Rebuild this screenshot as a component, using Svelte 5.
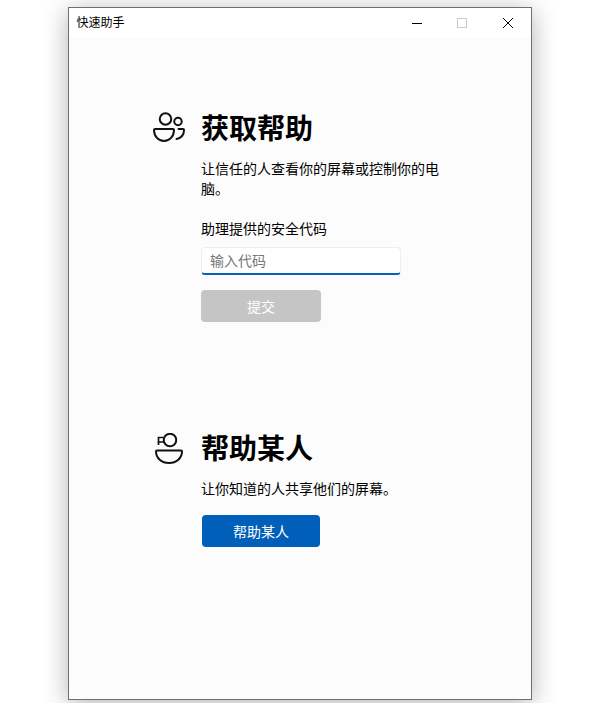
<script>
    let code = '';
</script>

<div class="page">
    <div class="window">
        <header class="titlebar">
            <span class="title">快速助手</span>
            <div class="controls">
                <span class="ctl">
                    <svg width="12" height="12" viewBox="0 0 12 12"><path d="M2 6.500h10" stroke="#000" fill="none" /></svg>
                </span>
                <span class="ctl">
                    <svg width="12" height="12" viewBox="0 0 12 12"><rect x="1.500" y="1.500" width="9" height="9" stroke="#ccc" fill="none" /></svg>
                </span>
                <span class="ctl">
                    <svg width="12" height="12" viewBox="0 0 12 12"><path d="M1 1l10 10M11 1L1 11" stroke="#000" fill="none" /></svg>
                </span>
            </div>
        </header>

        <main class="content">
            <section class="block get-help">
                <div class="icon">
                    <svg width="34" height="32" viewBox="0 0 34 32" fill="none" stroke="#111" stroke-width="2">
                        <circle cx="12.500" cy="8" r="5.750" />
                        <path d="M2 18h18a1 1 0 0 1 1 1c0 6.500-4.500 11-10 11S1 25.500 1 19a1 1 0 0 1 1-1z" />
                        <circle cx="25" cy="10.500" r="3.750" />
                        <path d="M25.500 18h4.500a1 1 0 0 1 1 1c0 4.500-3 8-7.500 9" stroke-linecap="round" />
                    </svg>
                </div>
                <div class="body">
                    <h1>获取帮助</h1>
                    <p class="desc">让信任的人查看你的屏幕或控制你的电脑。</p>
                    <label class="label" for="code">助理提供的安全代码</label>
                    <input id="code" class="input" placeholder="输入代码" bind:value={code} />
                    <button class="btn disabled" disabled>提交</button>
                </div>
            </section>

            <section class="block give-help">
                <div class="icon">
                    <svg width="34" height="32" viewBox="0 0 34 32" fill="none" stroke="#111" stroke-width="2">
                        <circle cx="17" cy="7" r="6.250" />
                        <path d="M10.500 4.500H5.500v4.500h5" stroke-width="1.700" />
                        <path d="M5.500 9v3" stroke-width="1.700" />
                        <path d="M4 17.500h24a1 1 0 0 1 1 1c0 6.500-5.500 11.500-13 11.500S3 25 3 18.500a1 1 0 0 1 1-1z" />
                    </svg>
                </div>
                <div class="body">
                    <h1>帮助某人</h1>
                    <p class="desc">让你知道的人共享他们的屏幕。</p>
                    <button class="btn primary">帮助某人</button>
                </div>
            </section>
        </main>
    </div>
</div>

<style>
:global(body) {
    margin: 0;
    background: #fff;
}

.page {
    display: flex;
    justify-content: center;
    padding-top: 7px;
    height: 696px;
    overflow: hidden;
    font-family: "Noto Sans CJK SC", "Liberation Sans", sans-serif;
    color: #000;
}

.window {
    box-sizing: border-box;
    width: 464px;
    height: 693px;
    border: 1px solid #6f6f6f;
    background: #fcfcfc;
    box-shadow: 0 4px 24px rgba(0, 0, 0, 0.3);
    display: flex;
    flex-direction: column;
}

.titlebar {
    height: 30px;
    background: #fff;
    display: flex;
    justify-content: space-between;
    align-items: center;
    padding-left: 7.5px;
}

.title {
    font-size: 12px;
    line-height: 28px;
    margin-bottom: 2px;
}

.controls {
    display: flex;
}

.ctl {
    width: 46px;
    height: 30px;
    display: flex;
    align-items: center;
    justify-content: center;
}

.content {
    flex: 1;
    padding: 69px 0 0 84px;
}

.block {
    display: flex;
    gap: 14px;
}

.give-help {
    margin-top: 105px;
}

.icon {
    width: 34px;
    padding-top: 4px;
}

.give-help .icon {
    padding-top: 6px;
}

.body {
    width: 240px;
}

h1 {
    margin: 0;
    font-size: 28px;
    line-height: 40px;
    font-weight: 700;
}

.desc {
    margin: 11px 0 0;
    font-size: 14px;
    line-height: 20px;
}

.label {
    display: block;
    margin-top: 20px;
    font-size: 14px;
    line-height: 20px;
}

.input {
    display: block;
    box-sizing: border-box;
    width: 200px;
    height: 28px;
    margin-top: 9px;
    padding: 0 8px 2px;
    border: 1px solid #eeeeee;
    border-bottom: 2px solid #0a5fb4;
    border-radius: 4px;
    background: #fff;
    font: inherit;
    font-size: 14px;
    outline: none;
}

.input::placeholder {
    color: #777;
}

.btn {
    display: block;
    height: 32px;
    border: none;
    border-radius: 4px;
    font: inherit;
    font-size: 14px;
    color: #fff;
}

.disabled {
    width: 120px;
    margin-top: 15px;
    background: #c5c5c5;
}

.primary {
    width: 118px;
    margin-top: 17px;
    margin-left: 1px;
    background: #005fb8;
}
</style>
